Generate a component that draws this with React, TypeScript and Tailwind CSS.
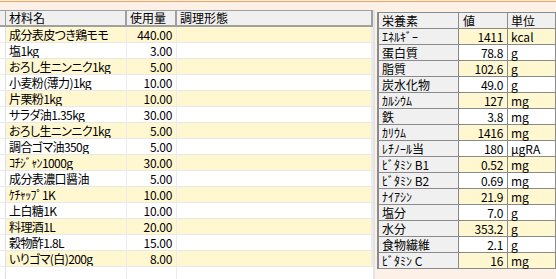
const FONT = "font-['MS_UI_Gothic','Noto_Sans_CJK_JP',sans-serif] [font-feature-settings:'palt']";

const INGREDIENTS: [string, string][] = [
  ['成分表皮つき鶏モモ', '440.00'],
  ['塩1kg', '3.00'],
  ['おろし生ニンニク1kg', '5.00'],
  ['小麦粉(薄力)1kg', '10.00'],
  ['片栗粉1kg', '10.00'],
  ['サラダ油1.35kg', '30.00'],
  ['おろし生ニンニク1kg', '5.00'],
  ['調合ゴマ油350g', '5.00'],
  ['ｺﾁｼﾞｬﾝ1000g', '30.00'],
  ['成分表濃口醤油', '5.00'],
  ['ｹﾁｬｯﾌﾟ1K', '10.00'],
  ['上白糖1K', '10.00'],
  ['料理酒1L', '20.00'],
  ['穀物酢1.8L', '15.00'],
  ['いりゴマ(白)200g', '8.00'],
];

const NUTRIENTS: [string, string, string][] = [
  ['ｴﾈﾙｷﾞｰ', '1411', 'kcal'],
  ['蛋白質', '78.8', 'g'],
  ['脂質', '102.6', 'g'],
  ['炭水化物', '49.0', 'g'],
  ['ｶﾙｼｳﾑ', '127', 'mg'],
  ['鉄', '3.8', 'mg'],
  ['ｶﾘｳﾑ', '1416', 'mg'],
  ['ﾚﾁﾉｰﾙ当', '180', 'μgRA'],
  ['ﾋﾞﾀﾐﾝ B1', '0.52', 'mg'],
  ['ﾋﾞﾀﾐﾝ B2', '0.69', 'mg'],
  ['ﾅｲｱｼﾝ', '21.9', 'mg'],
  ['塩分', '7.0', 'g'],
  ['水分', '353.2', 'g'],
  ['食物繊維', '2.1', 'g'],
  ['ﾋﾞﾀﾐﾝ C', '16', 'mg'],
];

function IngredientTable() {
  return (
    <div className="flex w-[375px] h-full">
      <div className="w-[373px] h-full bg-white overflow-hidden">
        {/* header */}
        <div className="flex h-[17px] bg-[#f0f0f0] border-t border-b-2 border-[#a0a0a0] leading-[14px]">
          <div className="w-[6px] border-r border-[#a0a0a0]" />
          <div className="w-[121px] pl-[3px] border-r-2 border-[#a0a0a0]">材料名</div>
          <div className="w-[50px] pl-[3px] border-r-2 border-[#a0a0a0]">使用量</div>
          <div className="flex-1 pl-[3px] border-r-2 border-[#a0a0a0]">調理形態</div>
        </div>
        {INGREDIENTS.map(([name, qty], i) => (
          <div key={i} className="flex h-[16px] leading-[15px] border-b border-[#e8e8e8]">
            <div className="w-[6px] border-r border-[#e0e0e0] bg-white" />
            <div className={`flex ${i % 2 === 0 ? 'bg-[#fff7d0]' : 'bg-white'} flex-1`}>
              <div className="w-[121px] pl-[3px] border-r border-[#ececec] whitespace-nowrap overflow-hidden tracking-[-0.6px]">{name}</div>
              <div className="w-[50px] pr-[4px] text-right border-r border-[#ececec] tracking-[-0.3px]">{qty}</div>
              <div className="flex-1 border-r-2 border-[#ececec]" />
            </div>
          </div>
        ))}
        <div className="flex h-[16px]">
          <div className="w-[6px] border-r border-[#e0e0e0]" />
          <div className="w-[121px] border-r border-[#ececec]" />
          <div className="w-[50px] border-r border-[#ececec]" />
        </div>
      </div>
      <div className="w-[2px] h-full bg-[#e4e4e4]" />
    </div>
  );
}

function NutrientTable() {
  const cell = 'border-r border-b border-[#8a8a8a]';
  return (
    <div className="ml-[2px] mt-[2px] self-start border-l-2 border-t border-[#8a8a8a]">
      <div className="flex h-[16px] leading-[15px] bg-[#f0f0f0]">
        <div className={`w-[80px] pl-[3px] ${cell}`}>栄養素</div>
        <div className={`w-[49px] pl-[4px] ${cell}`}>値</div>
        <div className={`w-[48px] pl-[3px] ${cell}`}>単位</div>
      </div>
      {NUTRIENTS.map(([name, val, unit], i) => {
        const bg = i % 2 === 0 ? 'bg-[#fff7d0]' : 'bg-white';
        return (
          <div key={i} className="flex h-[16px] leading-[15px]">
            <div className={`w-[80px] pl-[3px] bg-[#f0f0f0] whitespace-nowrap ${cell}`}>{name}</div>
            <div className={`w-[49px] pr-[4px] text-right tracking-[-0.3px] ${bg} ${cell}`}>{val}</div>
            <div className={`w-[48px] pl-[3px] ${bg} ${cell}`}>{unit}</div>
          </div>
        );
      })}
    </div>
  );
}

export default function App() {
  return (
    <div className={`w-[556px] h-[279px] bg-[#fdf0e6] flex flex-col overflow-hidden text-[12px] text-black ${FONT}`}>
      <div className="mt-[1px] h-[1px] bg-[#f5a058]" />
      <div className="flex flex-1 pt-[8px] min-h-0">
        <IngredientTable />
        <NutrientTable />
      </div>
    </div>
  );
}
